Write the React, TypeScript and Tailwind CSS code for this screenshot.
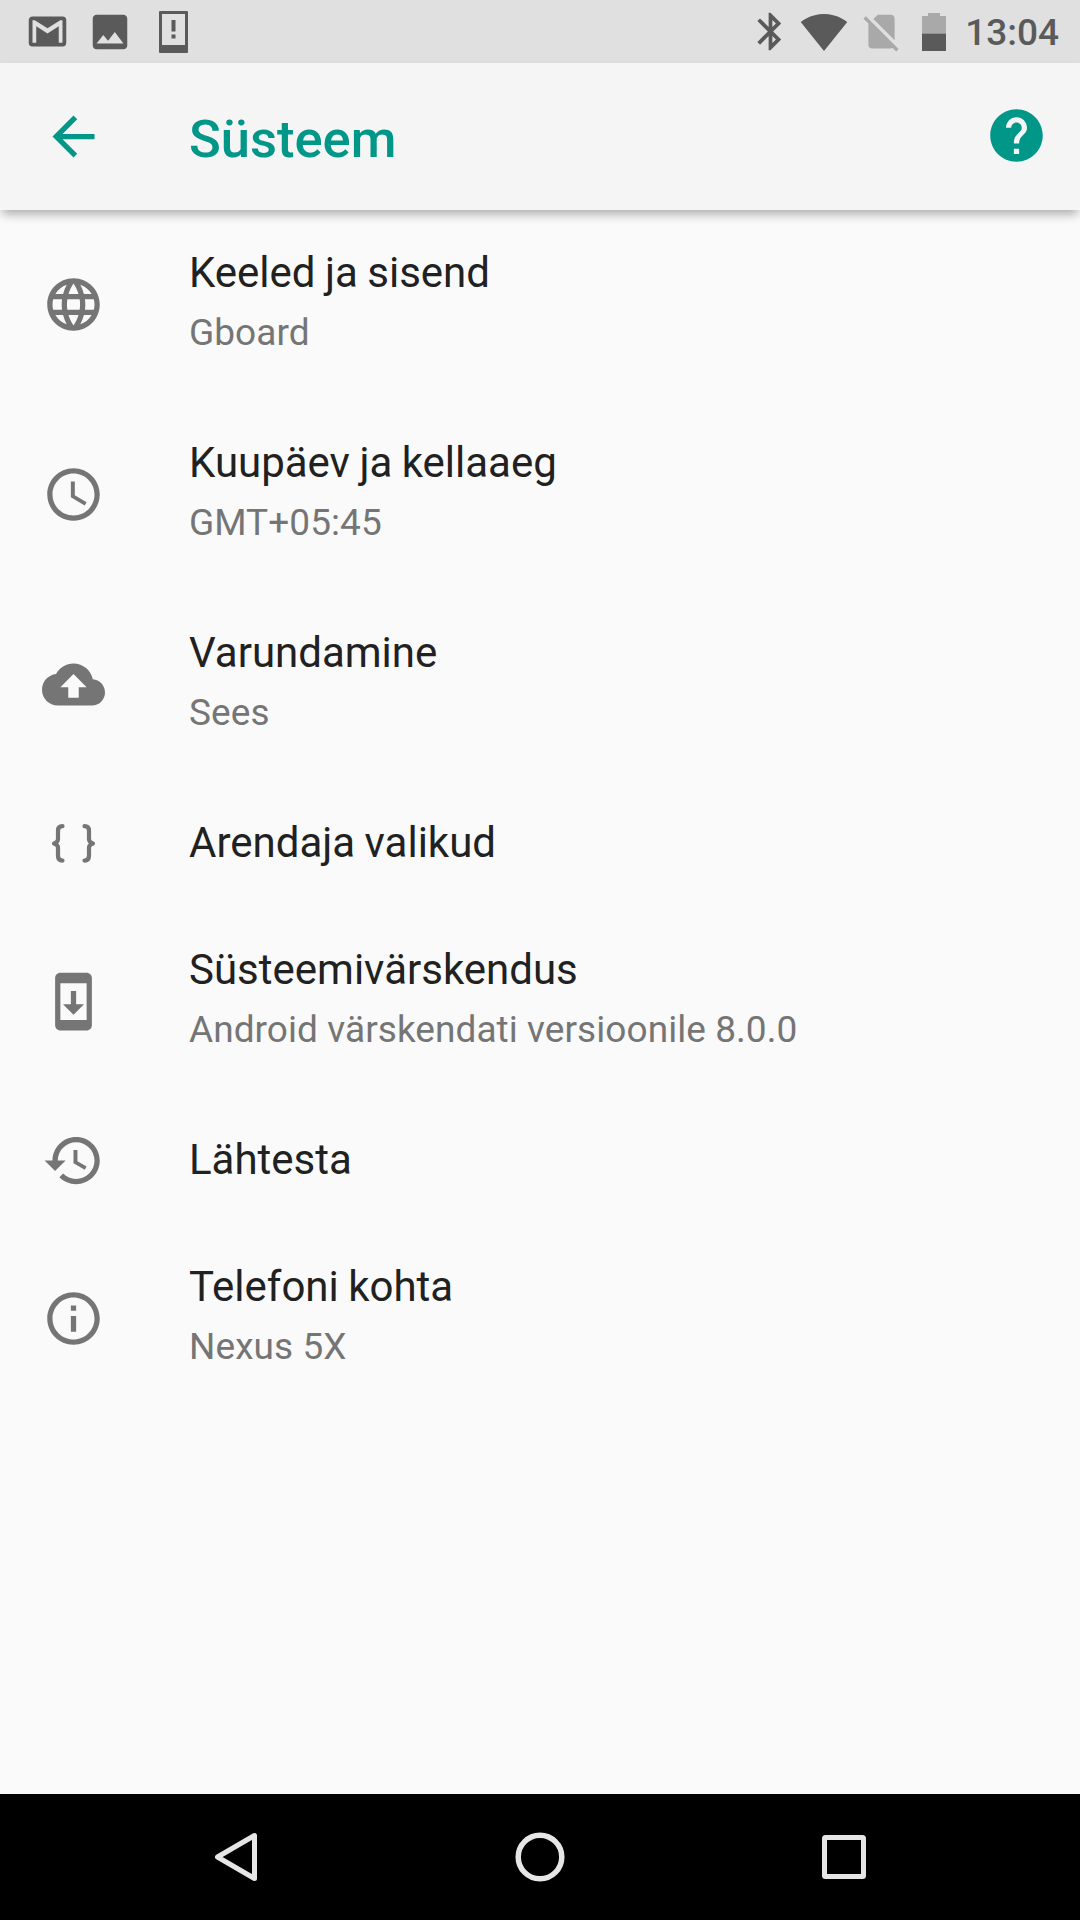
import type { ReactNode } from "react";

interface IconProps {
  d: string;
  className?: string;
}

function Icon({ d, className }: IconProps) {
  return (
    <svg viewBox="0 0 24 24" fill="currentColor" className={className}>
      <path d={d} />
    </svg>
  );
}

const paths = {
  gmail:
    "M20 18h-2V9.25L12 13 6 9.25V18H4V6h1.2l6.8 4.25L18.8 6H20m0-2H4c-1.11 0-2 .89-2 2v12a2 2 0 002 2h16a2 2 0 002-2V6a2 2 0 00-2-2z",
  photo:
    "M21 19V5c0-1.1-.9-2-2-2H5c-1.1 0-2 .9-2 2v14c0 1.1.9 2 2 2h14c1.1 0 2-.9 2-2zM8.5 13.5l2.5 3.01L14.5 12l4.5 6H5l3.5-4.5z",
  bluetooth:
    "M17.71 7.71L12 2h-1v7.59L6.41 5 5 6.41 10.59 12 5 17.59 6.41 19 11 14.41V22h1l5.71-5.71-4.3-4.29 4.3-4.29zM13 5.83l1.88 1.88L13 9.59V5.83zm1.88 10.46L13 18.17v-3.76l1.88 1.88z",
  wifi: "M12.01 21.49L23.64 7c-.45-.34-4.93-4-11.64-4C5.28 3 .81 6.66.36 7l11.63 14.49.01.01.01-.01z",
  noSim:
    "M18.99 5c0-1.1-.89-2-1.99-2h-7L7.66 5.34 19 16.68 18.99 5zM3.65 3.88L2.38 5.15 5 7.77V19c0 1.1.9 2 2 2h10.01c.35 0 .67-.1.96-.26l1.88 1.88 1.27-1.27L3.65 3.88z",
  back: "M20 11H7.83l5.59-5.59L12 4l-8 8 8 8 1.41-1.41L7.83 13H20v-2z",
  help: "M12 2C6.48 2 2 6.48 2 12s4.48 10 10 10 10-4.48 10-10S17.52 2 12 2zm1 17h-2v-2h2v2zm2.07-7.75l-.9.92C13.45 12.9 13 13.5 13 15h-2v-.5c0-1.1.45-2.1 1.17-2.83l1.24-1.26c.37-.36.59-.86.59-1.41 0-1.1-.9-2-2-2s-2 .9-2 2H8c0-2.21 1.79-4 4-4s4 1.79 4 4c0 .88-.36 1.68-.93 2.25z",
  language:
    "M11.99 2C6.47 2 2 6.48 2 12s4.47 10 9.99 10C17.52 22 22 17.52 22 12S17.52 2 11.99 2zm6.93 6h-2.95c-.32-1.25-.78-2.45-1.38-3.56 1.84.63 3.37 1.91 4.33 3.56zM12 4.04c.83 1.2 1.48 2.53 1.91 3.96h-3.82c.43-1.43 1.08-2.76 1.91-3.96zM4.26 14C4.1 13.36 4 12.69 4 12s.1-1.36.26-2h3.38c-.08.66-.14 1.32-.14 2s.06 1.34.14 2H4.26zm.82 2h2.95c.32 1.25.78 2.45 1.38 3.56-1.84-.63-3.37-1.9-4.33-3.56zm2.95-8H5.08c.96-1.66 2.49-2.93 4.33-3.56C8.81 5.55 8.35 6.75 8.03 8zM12 19.96c-.83-1.2-1.48-2.53-1.91-3.96h3.82c-.43 1.43-1.08 2.76-1.91 3.96zM14.34 14H9.66c-.09-.66-.16-1.32-.16-2s.07-1.35.16-2h4.68c.09.65.16 1.32.16 2s-.07 1.34-.16 2zm.25 5.56c.6-1.11 1.06-2.31 1.38-3.56h2.95c-.96 1.65-2.49 2.93-4.33 3.56zM16.36 14c.08-.66.14-1.32.14-2s-.06-1.34-.14-2h3.38c.16.64.26 1.31.26 2s-.1 1.36-.26 2h-3.38z",
  clock:
    "M11.99 2C6.47 2 2 6.48 2 12s4.47 10 9.99 10C17.52 22 22 17.52 22 12S17.52 2 11.99 2zM12 20c-4.42 0-8-3.58-8-8s3.58-8 8-8 8 3.58 8 8-3.58 8-8 8zM12.5 7H11v6l5.25 3.15.75-1.23-4.5-2.67z",
  backup:
    "M19.35 10.04C18.67 6.59 15.64 4 12 4 9.11 4 6.6 5.64 5.35 8.04 2.34 8.36 0 10.91 0 14c0 3.31 2.69 6 6 6h13c2.76 0 5-2.24 5-5 0-2.64-2.05-4.78-4.65-4.96zM14 13v4h-4v-4H7l5-5 5 5h-3z",
  update:
    "M17 1.01L7 1c-1.1 0-2 .9-2 2v18c0 1.1.9 2 2 2h10c1.1 0 2-.9 2-2V3c0-1.1-.9-1.99-2-1.99zM17 19H7V5h10v14zm-1-6h-3V8h-2v5H8l4 4 4-4z",
  restore:
    "M13 3c-4.97 0-9 4.03-9 9H1l3.89 3.89.07.14L9 12H6c0-3.87 3.13-7 7-7s7 3.13 7 7-3.13 7-7 7c-1.93 0-3.68-.79-4.94-2.06l-1.42 1.42C8.27 19.99 10.51 21 13 21c4.97 0 9-4.03 9-9s-4.03-9-9-9zm-1 5v5l4.28 2.54.72-1.21-3.5-2.08V8H12z",
  info: "M11 7h2v2h-2zm0 4h2v6h-2zm1-9C6.48 2 2 6.48 2 12s4.48 10 10 10 10-4.48 10-10S17.52 2 12 2zm0 18c-4.41 0-8-3.59-8-8s3.59-8 8-8 8 3.59 8 8-3.59 8-8 8z",
};

function BracesIcon() {
  return (
    <svg
      viewBox="0 0 63 63"
      fill="none"
      stroke="currentColor"
      strokeWidth="4.200"
      strokeLinecap="round"
      strokeLinejoin="round"
      className="block size-[63px]"
    >
      <path d="M20.500 14.200q-4.500 0-4.500 4.500v8.500q0 3-4 4.200q4 1.200 4 4.200v8.500q0 4.500 4.500 4.500" />
      <path d="M42.500 14.200q4.500 0 4.500 4.500v8.500q0 3 4 4.200q-4 1.200-4 4.200v8.500q0 4.500-4.500 4.500" />
    </svg>
  );
}

function StatusBar() {
  return (
    <div className="flex h-[63px] items-center justify-between bg-[#e0e0e0] pl-[25px] pr-[21px] text-[#5a5a5a]">
      <div className="flex items-center">
        <Icon d={paths.gmail} className="size-[45px]" />
        <Icon d={paths.photo} className="ml-[17px] size-[46px]" />
        <svg viewBox="0 0 29 42" fill="currentColor" className="ml-[26px] h-[42px] w-[29px]">
          <path fillRule="evenodd" d="M1 0h27q1 0 1 1v40q0 1-1 1H1q-1 0-1-1V1q0-1 1-1zM3 3v31h23V3z" />
          <path d="M12.500 9h4v11.500h-4zM12.500 23.500h4v4h-4z" />
        </svg>
      </div>
      <div className="flex items-center">
        <Icon d={paths.bluetooth} className="size-[45px]" />
        <Icon d={paths.wifi} className="ml-[7px] size-12" />
        <Icon d={paths.noSim} className="ml-[11px] size-[45px] text-[#a9a9a9]" />
        <svg viewBox="0 0 24 38" className="ml-[18px] h-[38px] w-6">
          <path d="M6 0h12v3h6v18H0V3h6z" fill="#a9a9a9" />
          <path d="M0 20.700h24V38H0z" fill="currentColor" />
        </svg>
        <span className="ml-[19px] pt-[3px] text-[37px] font-medium leading-[60px]">13:04</span>
      </div>
    </div>
  );
}

function Toolbar() {
  return (
    <header className="z-10 flex h-[147px] items-center bg-[#f5f5f5] pl-[42px] pr-8 text-[#009688] shadow-[0_6px_10px_-2px_rgba(0,0,0,0.32)]">
      <Icon d={paths.back} className="size-[63px]" />
      <h1 className="ml-21 pt-[5px] text-[52.5px] font-medium leading-[63px]">Süsteem</h1>
      <Icon d={paths.help} className="mb-0.5 ml-auto size-[63px]" />
    </header>
  );
}

interface SettingProps {
  icon: ReactNode;
  title: string;
  summary?: string;
}

function Setting({ icon, title, summary }: SettingProps) {
  return (
    <li className={`flex items-center pl-[42px] ${summary ? "h-[190px]" : "h-[127px]"}`}>
      <span className={`text-[#757575] ${summary ? "" : "pt-px"}`}>{icon}</span>
      <div className="ml-21 flex flex-col">
        <span className="text-[42px] leading-[56px] text-[#212121] [word-spacing:-1px]">{title}</span>
        {summary && (
          <span className="text-[37px] leading-[63px] tracking-[0.06px] text-[#757575]">{summary}</span>
        )}
      </div>
    </li>
  );
}

function NavBar() {
  return (
    <nav className="flex h-[126px] items-center justify-between bg-black px-[211px] text-[#e6e6e6]">
      <svg viewBox="0 0 50 50" fill="none" stroke="currentColor" strokeWidth="5" className="size-[50px]">
        <path d="M43.500 3.500v43L6.500 25z" strokeLinejoin="round" />
      </svg>
      <svg viewBox="0 0 50 50" fill="none" stroke="currentColor" strokeWidth="5.500" className="size-[50px]">
        <circle cx="25" cy="25" r="21.800" />
      </svg>
      <svg viewBox="0 0 50 50" fill="none" stroke="currentColor" strokeWidth="5" className="size-[50px]">
        <rect x="5.500" y="5.500" width="39" height="39" rx="1" />
      </svg>
    </nav>
  );
}

const size = "block size-[63px]";

const settings: SettingProps[] = [
  { icon: <Icon d={paths.language} className={size} />, title: "Keeled ja sisend", summary: "Gboard" },
  { icon: <Icon d={paths.clock} className={size} />, title: "Kuupäev ja kellaaeg", summary: "GMT+05:45" },
  { icon: <Icon d={paths.backup} className={size} />, title: "Varundamine", summary: "Sees" },
  { icon: <BracesIcon />, title: "Arendaja valikud" },
  {
    icon: <Icon d={paths.update} className={size} />,
    title: "Süsteemivärskendus",
    summary: "Android värskendati versioonile 8.0.0",
  },
  { icon: <Icon d={paths.restore} className={size} />, title: "Lähtesta" },
  { icon: <Icon d={paths.info} className={size} />, title: "Telefoni kohta", summary: "Nexus 5X" },
];

export default function App() {
  return (
    <div className="flex h-[1920px] w-[1080px] flex-col overflow-hidden bg-[#fafafa] font-[Roboto,sans-serif]">
      <StatusBar />
      <Toolbar />
      <ul className="-mt-px flex-1">
        {settings.map((setting) => (
          <Setting key={setting.title} {...setting} />
        ))}
      </ul>
      <NavBar />
    </div>
  );
}
